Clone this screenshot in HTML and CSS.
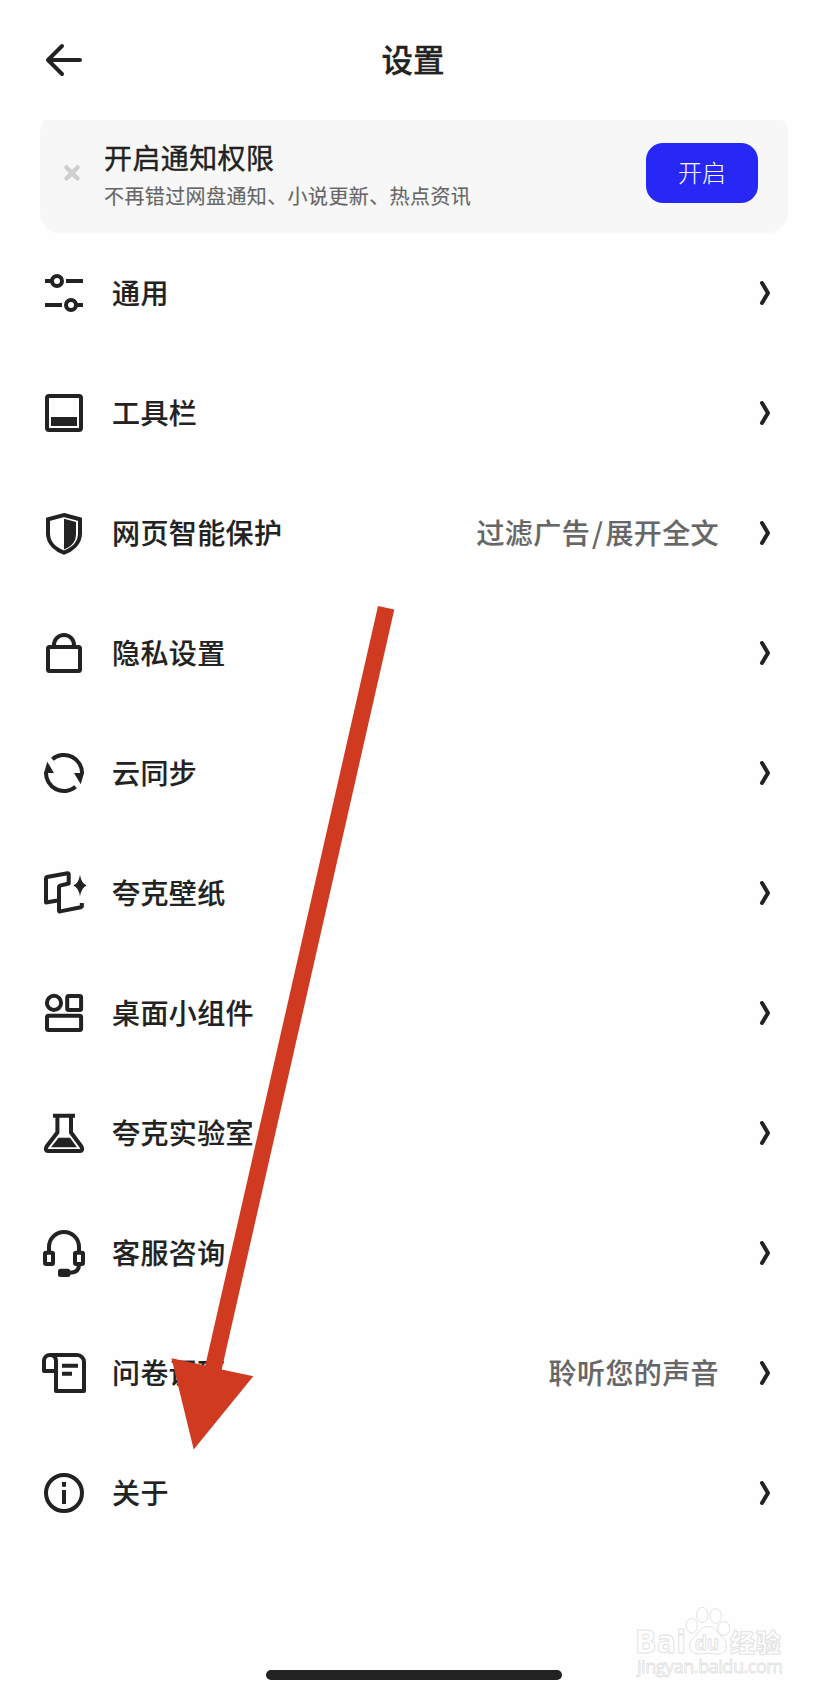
FILE: index.html
```html
<!DOCTYPE html>
<html lang="zh-CN">
<head>
<meta charset="utf-8">
<title>设置</title>
<link rel="stylesheet" href="styles.css">
</head>
<body>
<svg class="defs" aria-hidden="true">
  <symbol id="chevron" viewBox="0 0 16 28"><path d="M6 4 12 14 6 24"/></symbol>
</svg>
<div class="screen">
  <header class="header">
    <svg class="back" viewBox="0 0 48 48"><path d="M22 10 8 24 22 38M9 24H40"/></svg>
    <h1 class="title">设置</h1>
  </header>
  <div class="notice-clip">
    <section class="notice">
      <svg class="close" viewBox="0 0 20 20"><path d="M4.500 4.500l11 11M15.500 4.500l-11 11"/></svg>
      <div class="notice-text">
        <div class="notice-title">开启通知权限</div>
        <div class="notice-sub">不再错过网盘通知、小说更新、热点资讯</div>
      </div>
      <button class="enable">开启</button>
    </section>
  </div>
  <main class="list">
    <div class="row">
      <svg class="icon" viewBox="0 0 48 48"><path d="M5 12h6M26 12h17M5 36h17M37 36h6"/><circle cx="17" cy="12" r="5"/><circle cx="31" cy="36" r="5"/></svg>
      <span class="label">通用</span>
      <svg class="chev"><use href="#chevron"/></svg>
    </div>
    <div class="row">
      <svg class="icon" viewBox="0 0 48 48"><rect x="7" y="7" width="34" height="34" rx="2"/><path class="solid" d="M11 28h26v9H11z"/></svg>
      <span class="label">工具栏</span>
      <svg class="chev"><use href="#chevron"/></svg>
    </div>
    <div class="row">
      <svg class="icon" viewBox="0 0 48 48"><path d="M24 6 40 10.200V24.500C40 35 31 41 24 43.700 17 41 8 35 8 24.500V10.200Z"/><path class="solid" d="M24 9.700 36 13V25C36 33 31 37.500 24 40.500Z"/></svg>
      <span class="label">网页智能保护</span>
      <span class="value">过滤广告<span class="slash">/</span>展开全文</span>
      <svg class="chev"><use href="#chevron"/></svg>
    </div>
    <div class="row">
      <svg class="icon" viewBox="0 0 48 48"><rect x="8" y="18" width="32" height="24" rx="1.500"/><path d="M14 17v-1a10 10 0 0 1 20 0v1"/></svg>
      <span class="label">隐私设置</span>
      <svg class="chev"><use href="#chevron"/></svg>
    </div>
    <div class="row">
      <svg class="icon" viewBox="0 0 48 48"><path d="M12.400 10.200A18 18 0 0 1 42 25M35.600 37.800A18 18 0 0 1 6 23"/><path class="solid" d="M34 24H44L40.700 35.300ZM14 24H4L7.300 12.700Z"/></svg>
      <span class="label">云同步</span>
      <svg class="chev"><use href="#chevron"/></svg>
    </div>
    <div class="row">
      <svg class="icon" viewBox="0 0 48 48"><path class="round" d="M17.500 31.500 6 33.500V9.200Q6 8.200 7 8L27.600 4.300Q28.700 4.100 28.700 5.200V14.500L20 16.600Q19 16.900 19 18V41.500Q19 42.700 20.200 42.400L40.800 38.200Q41.800 38 41.800 37"/><path d="M41.800 38v-4"/><path class="solid" d="M40 5.700Q41.300 14.300 46.700 16.400 41.300 18.500 40 27.500 38.700 18.500 33.300 16.400 38.700 14.300 40 5.700Z"/></svg>
      <span class="label">夸克壁纸</span>
      <svg class="chev"><use href="#chevron"/></svg>
    </div>
    <div class="row">
      <svg class="icon" viewBox="0 0 48 48"><circle cx="14" cy="13.900" r="7.100"/><rect x="27.200" y="7" width="13.900" height="13.900" rx="1.500"/><rect x="7" y="26.800" width="34.100" height="14.200" rx="1.500"/></svg>
      <span class="label">桌面小组件</span>
      <svg class="chev"><use href="#chevron"/></svg>
    </div>
    <div class="row">
      <svg class="icon" viewBox="0 0 48 48"><path d="M13 6.800H35M17.400 7V23.500L6.600 37.500C5 40 6 42 8 42H40C42 42 43 40 41.400 37.500L31 23.500V7"/><path class="solid" d="M18.500 28.700H30L37 38.200H11Z"/></svg>
      <span class="label">夸克实验室</span>
      <svg class="chev"><use href="#chevron"/></svg>
    </div>
    <div class="row">
      <svg class="icon" viewBox="0 0 48 48"><path d="M9 23V18a15 15 0 0 1 30 0V23M39 36Q39 43.500 30 43.700"/><rect x="5" y="23.700" width="8" height="11.300" rx="1"/><rect x="35" y="23.700" width="8" height="11.300" rx="1"/><rect class="solid" x="18" y="39.700" width="12.300" height="8.300" rx="2.500"/></svg>
      <span class="label">客服咨询</span>
      <svg class="chev"><use href="#chevron"/></svg>
    </div>
    <div class="row">
      <svg class="icon" viewBox="0 0 48 48"><path class="round" d="M10 6H37a7 7 0 0 1 7 7V42H16V12a6 6 0 0 0-12 0V22H15"/><path d="M22 16.700H38M22 24.700H32"/></svg>
      <span class="label">问卷调研</span>
      <span class="value">聆听您的声音</span>
      <svg class="chev"><use href="#chevron"/></svg>
    </div>
    <div class="row">
      <svg class="icon" viewBox="0 0 48 48"><circle cx="24" cy="24" r="18"/><path d="M24 13v4.700M24 21v14"/></svg>
      <span class="label">关于</span>
      <svg class="chev"><use href="#chevron"/></svg>
    </div>
  </main>
  <div class="home-bar"></div>

  <svg class="pointer" viewBox="0 0 828 1696"><path d="M378 606 394.300 609.600 221.700 1369.500 253.300 1376.200 193.700 1449.500 171.500 1358.200 205.300 1365.500Z"/></svg>
  <svg class="watermark" viewBox="0 0 170 80">
    <text class="wm-latin" x="14" y="53" textLength="51" lengthAdjust="spacingAndGlyphs">Bai</text>
    <ellipse cx="70.700" cy="25.700" rx="5.700" ry="7.300"/>
    <ellipse cx="81.300" cy="15" rx="5.700" ry="7.600"/>
    <ellipse cx="94.700" cy="16" rx="5.700" ry="7.300"/>
    <ellipse cx="102.700" cy="28.500" rx="6" ry="7"/>
    <path d="M86.500 26.500C92 26 95 30 97.500 33.500 101 37.500 105.500 40 105.500 46 105.500 52 101 54.300 96 54 90 53 84 53 78 54 72 54.300 68.500 51 68.500 46 68.500 40 73 38 76 34 79 30 81.500 26.800 86.500 26.500Z"/>
    <text class="wm-du" x="74" y="50" textLength="24" lengthAdjust="spacingAndGlyphs">du</text>
    <text class="wm-cjk" x="109" y="52" textLength="51">经验</text>
    <text class="wm-url" x="16" y="73" textLength="146">jingyan.baidu.com</text>
  </svg>
</div>
</body>
</html>
```
FILE: styles.css
```css
* { box-sizing: border-box; }
body {
  margin: 0;
  background: #fefefe;
  color: #222;
  font-family: "Noto Sans CJK SC", "Noto Sans", sans-serif;
}
.defs { position: absolute; width: 0; height: 0; }
.screen {
  position: relative;
  width: 828px;
  height: 1696px;
  overflow: hidden;
  display: flex;
  flex-direction: column;
}
.header {
  height: 120px;
  padding: 0 40px;
  display: grid;
  grid-template-columns: 48px 1fr 50px;
  align-items: center;
}
.back { width: 48px; height: 48px; }
.back path { fill: none; stroke: #222; stroke-width: 4; stroke-linecap: round; stroke-linejoin: round; }
.title { margin: 0; padding-bottom: 5px; text-align: center; font-size: 31.500px; line-height: 48px; font-weight: 500; -webkit-text-stroke: .3px #222; }
.notice-clip { height: 113px; padding: 0 40px; overflow: hidden; }
.notice {
  margin-top: -7px;
  height: 120px;
  padding: 0 30px 0 22px;
  border-radius: 20px;
  background: #f7f7f7;
  display: flex;
  align-items: center;
}
.close { width: 20px; height: 20px; }
.close path { stroke: #cfcfcf; stroke-width: 4.500; stroke-linecap: round; }
.notice-text { flex: 1; padding: 3px 0 0 22px; white-space: nowrap; }
.notice-title { font-size: 28px; line-height: 42px; letter-spacing: .4px; font-weight: 400; -webkit-text-stroke: .4px #222; }
.notice-sub { font-size: 20px; line-height: 36px; letter-spacing: .4px; color: #666; -webkit-text-stroke: .15px #666; }
.enable {
  width: 112px;
  height: 60px;
  padding: 0 0 2px;
  border: 0;
  border-radius: 17px;
  background: #2728f5;
  color: #fff;
  font: 300 24px/58px "Noto Sans CJK SC", sans-serif;
}
.row {
  height: 120px;
  padding: 0 50px 0 40px;
  display: flex;
  align-items: center;
}
.icon { width: 48px; height: 48px; overflow: visible; fill: none; stroke: #222; stroke-width: 4; }
.icon .solid { fill: #222; stroke: none; }
.icon .round { stroke-linejoin: round; }
.label, .value { padding-bottom: 2px; font-size: 28px; line-height: 42px; letter-spacing: .4px; font-weight: 500; white-space: nowrap; -webkit-text-stroke: .15px currentColor; }
.label { flex: 1; margin-left: 24px; }
.value { color: #666; margin-right: 37px; }
.slash { margin: 0 2px; }
.chev { width: 16px; height: 28px; margin-right: 6px; fill: none; stroke: #222; stroke-width: 4; stroke-linecap: round; stroke-linejoin: round; }
.home-bar { width: 296px; height: 10px; margin: auto auto 16px; border-radius: 5px; background: #222; }
.pointer { position: absolute; left: 0; top: 0; width: 828px; height: 1696px; fill: #d03a20; pointer-events: none; }
.watermark {
  position: absolute;
  left: 621px;
  top: 1600px;
  width: 170px;
  height: 80px;
  fill: #fefefe;
  stroke: #e2e2e2;
  stroke-width: 1;
}
.wm-latin { font: 700 32px "DejaVu Sans", sans-serif; }
.wm-du { font: 700 20px "Liberation Sans", sans-serif; }
.wm-cjk { font: 900 25px "Noto Sans CJK SC", sans-serif; }
.wm-url { font: 400 18px "Open Sans", sans-serif; stroke-width: .8; }
```
